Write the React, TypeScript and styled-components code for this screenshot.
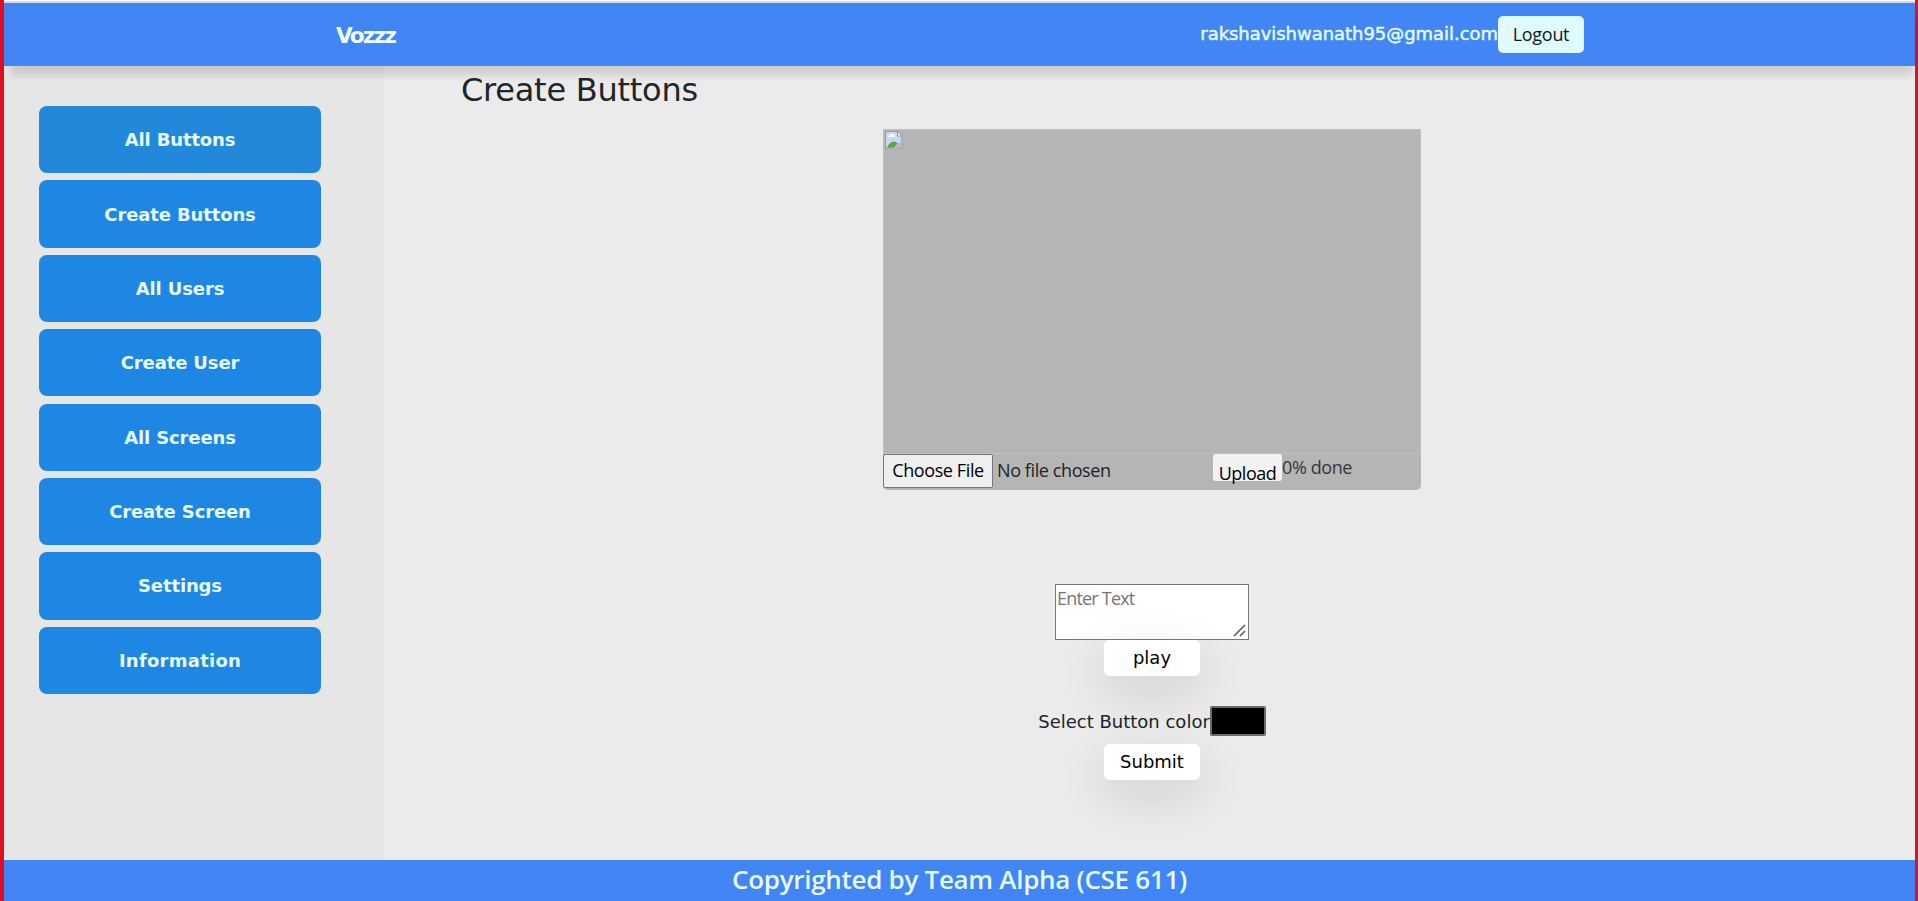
import React from "react";
import styled, { createGlobalStyle } from "styled-components";

const verdana = `Verdana, "DejaVu Sans", sans-serif`;
const segoe = `"Segoe UI", "Open Sans", "Noto Sans", sans-serif`;

const GlobalStyle = createGlobalStyle`
  *, *::before, *::after { box-sizing: border-box; }
  body { margin: 0; background: #ebebeb; color: #212529; font-family: ${segoe}; overflow: hidden; }
  button, textarea { font: inherit; margin: 0; }
`;

const Page = styled.div`
  display: flex;
  flex-direction: column;
  width: 100%;
  height: 901px;
  border-left: 4px solid #dc1022;
  border-right: 3px solid #cc1a2c;
`;

const TopEdge = styled.div`
  flex: none;
  height: 3px;
  background: #d3dde9;
  border-top: 1px solid #fdfdfd;
`;

const Header = styled.header`
  flex: none;
  display: flex;
  align-items: flex-start;
  justify-content: space-between;
  position: relative;
  z-index: 1;
  height: 63px;
  padding: 13px 331px 0 332px;
  background: #4285f4;
  box-shadow: 2px 13px 8px -4px rgba(0, 0, 0, 0.125);
`;

const Brand = styled.span`
  font: bold 21.6px/40px ${verdana};
  letter-spacing: -1.8px;
  color: #f0fdff;
`;

const Account = styled.div`
  display: flex;
`;

const Email = styled.span`
  font: 500 18px/35px ${verdana};
  letter-spacing: -0.04px;
  color: #e0fbff;
  -webkit-text-stroke: 0.5px #e0fbff;
  white-space: nowrap;
`;

const LogoutButton = styled.button`
  width: 86px;
  height: 37px;
  padding: 0;
  border: 0;
  border-radius: 5px;
  background: #e0fbff;
  color: #10181c;
  font-size: 18px;
  line-height: 37px;
  letter-spacing: -0.3px;
`;

const Body = styled.div`
  flex: 1;
  display: flex;
  min-height: 0;
`;

const Sidebar = styled.nav`
  flex: none;
  display: flex;
  flex-direction: column;
  gap: 7.1px;
  width: 380px;
  padding: 40px 63px 0 35px;
  background: #e6e6e6;
`;

const NavButton = styled.button<{ $active?: boolean; $tracking?: string }>`
  flex: none;
  height: 67.3px;
  padding: 1px 0 0;
  border: 0;
  border-radius: 8px;
  background: ${(p) => (p.$active ? "#2288da" : "#1e86e3")};
  color: #e4faff;
  font: bold 18px/66px ${verdana};
  letter-spacing: ${(p) => p.$tracking ?? "-0.13px"};
`;

const Main = styled.main`
  flex: 1;
  display: flex;
  flex-direction: column;
  align-items: center;
  padding-right: 72px;
  padding-left: 77px;
`;

const Title = styled.h1`
  align-self: flex-start;
  margin: 5px 0 19px;
  font: 400 32px/39px ${verdana};
  letter-spacing: -0.25px;
`;

const UploadCard = styled.section`
  flex: none;
  width: 538px;
  height: 361px;
  background: #b5b5b5;
  border-radius: 0 0 5px 5px;
`;

const Preview = styled.div`
  height: 325px;
  padding: 1px;
  border: 1px solid #c0c0c0;
`;

const UploadRow = styled.div`
  display: flex;
  align-items: flex-start;
  font-size: 18px;
`;

const ChooseFile = styled.button`
  width: 110px;
  height: 34px;
  padding: 0 0 1px;
  border: 1px solid #767676;
  border-radius: 2px;
  background: #efefef;
  color: #000;
  line-height: 31px;
  letter-spacing: -0.4px;
  white-space: nowrap;
`;

const FileName = styled.span`
  width: 220px;
  padding-left: 4px;
  line-height: 33px;
  letter-spacing: -0.4px;
`;

const UploadButton = styled.button`
  width: 69px;
  height: 27px;
  padding: 5px 0 0;
  border: 0;
  border-radius: 3px;
  background: #f2f2f2;
  color: #000;
  line-height: 28px;
  letter-spacing: -0.5px;
`;

const Progress = styled.span`
  line-height: 26px;
  letter-spacing: -0.4px;
  color: #33373b;
`;

const InputFrame = styled.div`
  position: relative;
  flex: none;
  width: 194px;
  height: 56px;
  margin-top: 94px;
`;

const TextInput = styled.textarea`
  display: block;
  width: 100%;
  height: 100%;
  padding: 0 1px;
  border: 1px solid #767676;
  background: #fff;
  font-size: 18px;
  line-height: 26px;
  letter-spacing: -0.8px;
  resize: none;
  &::placeholder { color: #757575; }
`;

const Grip = styled.svg`
  position: absolute;
  right: 3px;
  bottom: 3px;
`;

const ActionButton = styled.button`
  flex: none;
  width: 96px;
  height: 36px;
  padding: 0;
  border: 0;
  border-radius: 5px;
  background: #fff;
  color: #000;
  font: 18px/36px ${verdana};
  position: relative;
  box-shadow: 0 16px 48px rgba(0, 0, 0, 0.125);
`;

const ColorRow = styled.div`
  flex: none;
  display: flex;
  margin: 30px 0 7px;
  font: 18px/31px ${verdana};
`;

const ColorSwatch = styled.span`
  width: 56px;
  height: 30px;
  border: 2px solid #6b6b6b;
  border-radius: 2px;
  background: #000;
`;

const Footer = styled.footer`
  flex: none;
  height: 41px;
  background: #4285f4;
  color: #e4faff;
  text-align: center;
  font-size: 26px;
  font-weight: 600;
  line-height: 38px;
  letter-spacing: -0.3px;
`;

const BrokenImage = () => (
  <svg width="18" height="18" viewBox="0 0 18 18" display="block">
    <path d="M.5.5h12l4.500 4.500v12H.5z" fill="#c6d8f5" stroke="#96989b" />
    <path d="M3 6q0-2 2-2 1-2 3-1 2 0 2 3z" fill="#fff" />
    <path d="M2 16.500q3-7 8-6l3 2-4 4z" fill="#57aa3e" />
    <path d="M12.500.5V5H17z" fill="#fff" stroke="#96989b" />
    <path d="M18 8l-9 10h3l6-6z" fill="#b5b5b5" />
  </svg>
);

const navItems = [
  { label: "All Buttons" },
  { label: "Create Buttons" },
  { label: "All Users" },
  { label: "Create User" },
  { label: "All Screens" },
  { label: "Create Screen" },
  { label: "Settings" },
  { label: "Information", tracking: "0.25px" },
];

export default function App() {
  return (
    <Page>
      <GlobalStyle />
      <TopEdge />
      <Header>
        <Brand>Vozzz</Brand>
        <Account>
          <Email>rakshavishwanath95@gmail.com</Email>
          <LogoutButton>Logout</LogoutButton>
        </Account>
      </Header>
      <Body>
        <Sidebar>
          {navItems.map(({ label, tracking }, i) => (
            <NavButton key={label} $active={i === 0} $tracking={tracking}>{label}</NavButton>
          ))}
        </Sidebar>
        <Main>
          <Title>Create Buttons</Title>
          <UploadCard>
            <Preview><BrokenImage /></Preview>
            <UploadRow>
              <ChooseFile>Choose File</ChooseFile>
              <FileName>No file chosen</FileName>
              <UploadButton>Upload</UploadButton>
              <Progress>0% done</Progress>
            </UploadRow>
          </UploadCard>
          <InputFrame>
            <TextInput placeholder="Enter Text" />
            <Grip width="13" height="13" viewBox="0 0 13 13" stroke="#555" strokeWidth="1.5">
              <path d="M1 12L12 1M7 12l5-5" />
            </Grip>
          </InputFrame>
          <ActionButton>play</ActionButton>
          <ColorRow>
            <span>Select Button color</span>
            <ColorSwatch />
          </ColorRow>
          <ActionButton>Submit</ActionButton>
        </Main>
      </Body>
      <Footer>Copyrighted by Team Alpha (CSE 611)</Footer>
    </Page>
  );
}
